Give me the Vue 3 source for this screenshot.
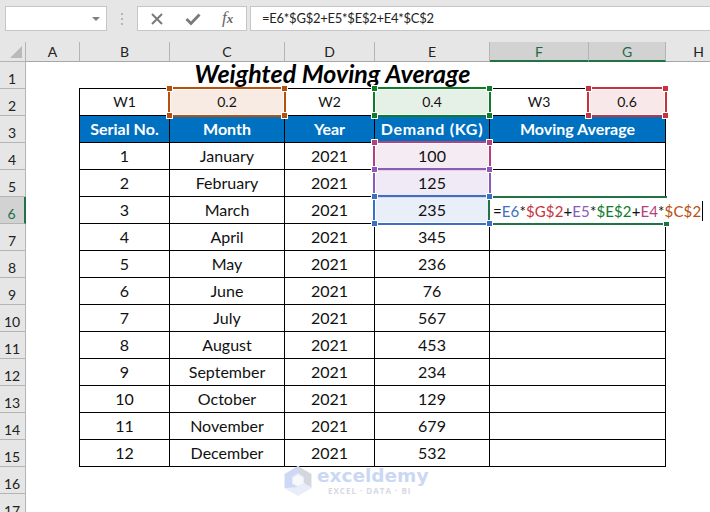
<script setup>
const cols = ['A', 'B', 'C', 'D', 'E', 'F', 'G', 'H']
const rowNums = Array.from({ length: 17 }, (_, i) => i + 1)
const data = [
  ['1', 'January', '2021', '100'],
  ['2', 'February', '2021', '125'],
  ['3', 'March', '2021', '235'],
  ['4', 'April', '2021', '345'],
  ['5', 'May', '2021', '236'],
  ['6', 'June', '2021', '76'],
  ['7', 'July', '2021', '567'],
  ['8', 'August', '2021', '453'],
  ['9', 'September', '2021', '234'],
  ['10', 'October', '2021', '129'],
  ['11', 'November', '2021', '679'],
  ['12', 'December', '2021', '532'],
]
const weights = [
  { col: 2, text: 'W1' },
  { col: 3, text: '0.2', fill: 'fill-orange' },
  { col: 4, text: 'W2' },
  { col: 5, text: '0.4', fill: 'fill-green' },
  { col: 6, text: 'W3' },
  { col: 7, text: '0.6', fill: 'fill-red' },
]
const heads = ['Serial No.', 'Month', 'Year', 'Demand (KG)']
const formula = [
  ['=', 'k'], ['E6', 'b'], ['*', 'k'], ['$G$2', 'r'], ['+', 'k'], ['E5', 'p'], ['*', 'k'],
  ['$E$2', 'g'], ['+', 'k'], ['E4', 'm'], ['*', 'k'], ['$C$2', 'o'],
]
const marks = [
  { c: 3, r: 2, cls: 'mk-orange' },
  { c: 5, r: 2, cls: 'mk-green' },
  { c: 7, r: 2, cls: 'mk-red' },
  { c: 5, r: 4, cls: 'mk-magenta' },
  { c: 5, r: 5, cls: 'mk-purple' },
  { c: 5, r: 6, cls: 'mk-blue' },
]
const place = (c, r, span = 1) => ({ gridColumn: `${c + 1} / span ${span}`, gridRow: r + 1 })
const fillFor = (r) => ({ 4: 'fill-magenta', 5: 'fill-purple', 6: 'fill-blue' })[r]
</script>

<template>
  <div class="app">
    <div class="bar">
      <div class="namebox"><span class="caret-down"></span></div>
      <div class="grip"><i></i><i></i><i></i></div>
      <div class="fxbtns">
        <svg width="14" height="14" viewBox="0 0 14 14"><path d="M2 2 L12 12 M12 2 L2 12" stroke="#7a7a7a" stroke-width="2" fill="none"/></svg>
        <svg width="16" height="14" viewBox="0 0 16 14"><path d="M1.5 7 L6 11.5 L14.5 2.5" stroke="#7a7a7a" stroke-width="2.8" fill="none"/></svg>
        <span class="fx">f<span class="fx-x">x</span></span>
      </div>
      <div class="fbar">=E6*$G$2+E5*$E$2+E4*$C$2</div>
    </div>

    <div class="sheet">
      <div class="corner"><span></span></div>
      <div
        v-for="(c, i) in cols"
        :key="c"
        class="colh"
        :class="{ sel: c === 'F' || c === 'G' }"
        :style="{ gridColumn: i + 2, gridRow: 1 }"
      >{{ c }}</div>
      <div
        v-for="n in rowNums"
        :key="n"
        class="rowh"
        :class="{ sel: n === 6 }"
        :style="{ gridColumn: 1, gridRow: n + 1 }"
      ><span>{{ n }}</span></div>

      <div class="title" :style="place(2, 1, 5)">Weighted Moving Average</div>

      <div
        v-for="w in weights"
        :key="w.col"
        class="cell"
        :class="w.fill"
        :style="place(w.col, 2)"
      >{{ w.text }}</div>

      <div
        v-for="(h, i) in heads"
        :key="h"
        class="cell head"
        :class="{ wide: i === 3 }"
        :style="place(i + 2, 3)"
      >{{ h }}</div>
      <div class="cell head" :style="place(6, 3, 2)">Moving Average</div>

      <template v-for="(row, ri) in data" :key="ri">
        <div
          v-for="(v, ci) in row"
          :key="ci"
          class="cell big"
          :class="ci === 3 ? fillFor(ri + 4) : ''"
          :style="place(ci + 2, ri + 4)"
        >{{ v }}</div>
        <div class="cell" :style="place(6, ri + 4, 2)"></div>
      </template>

      <div class="editor" :style="place(6, 6, 2)">
        <div class="edit-text">
          <span v-for="(f, i) in formula" :key="i" :class="f[1]">{{ f[0] }}</span><span class="text-caret"></span>
        </div>
        <i class="fill-handle"></i>
      </div>

      <div
        v-for="m in marks"
        :key="m.cls"
        class="mark"
        :class="m.cls"
        :style="place(m.c, m.r)"
      >
        <i class="h tl"></i><i class="h tr"></i><i class="h bl"></i><i class="h br"></i>
      </div>
    </div>

    <div class="wm">
      <svg width="30" height="32" viewBox="0 0 30 32">
        <path d="M15 1 L29 9 L29 23 L15 31 L1 23 L1 9 Z" fill="#e9edf7"/>
        <path d="M15 1 L28 9 L28 22 L21 18 L21 12 L15 8 Z" fill="#d4d7dd"/>
        <path d="M2 9 L15 1 L15 8 L9 12 L9 19 L15 22 L2 23 Z" fill="#ccd8f5"/>
        <path d="M15 10 L20 13 L20 18 L15 21 L10 18 L10 13 Z" fill="#f7f8fb"/>
      </svg>
      <div class="wm-text">
        <div class="wm-name">exceldemy</div>
        <div class="wm-sub">EXCEL · DATA · BI</div>
      </div>
    </div>
  </div>
</template>

<style scoped>
.app {
  position: relative;
  width: 710px;
  height: 512px;
  overflow: hidden;
  background: #fff;
  font-family: Lato, "Open Sans", sans-serif;
  color: #111;
}
.bar {
  height: 42px;
  box-sizing: border-box;
  background: #e6e6e6;
  padding: 6px 0 11px 5px;
  display: flex;
}
.namebox {
  width: 102px;
  background: #fff;
  border: 1px solid #c6c6c6;
  box-sizing: border-box;
  position: relative;
}
.caret-down {
  position: absolute;
  right: 6px;
  top: 10px;
  border: 4px solid transparent;
  border-top: 4px solid #7f7f7f;
  border-bottom: 0;
}
.grip {
  width: 30px;
  display: flex;
  flex-direction: column;
  align-items: center;
  justify-content: center;
  gap: 3px;
}
.grip i {
  width: 2px;
  height: 2px;
  background: #b4b4b4;
}
.fxbtns {
  width: 110px;
  background: #fff;
  border: 1px solid #c6c6c6;
  box-sizing: border-box;
  display: flex;
  align-items: center;
  padding-left: 12px;
  gap: 21px;
}
.fx {
  font-family: "Liberation Serif", serif;
  font-style: italic;
  font-size: 17px;
  color: #666;
  line-height: 1;
  margin-top: -2px;
}
.fx-x {
  font-size: 13px;
  font-weight: 700;
}
.fbar {
  flex: 1;
  margin-left: 3px;
  background: #fff;
  border: 1px solid #c6c6c6;
  border-right: 0;
  box-sizing: border-box;
  padding-left: 11px;
  font-size: 13px;
  letter-spacing: -0.25px;
  line-height: 23px;
  color: #222;
}
.sheet {
  display: grid;
  grid-template-columns: 26px 54px 90px 115px 90px 115px 99px 77px 66px;
  grid-template-rows: 20px repeat(17, 27px);
}
.corner {
  grid-column: 1;
  grid-row: 1;
  background: #e6e6e6;
  border-right: 1px solid #b4b4b4;
  border-bottom: 1px solid #b4b4b4;
  box-sizing: border-box;
  position: relative;
}
.corner span {
  position: absolute;
  right: 3px;
  bottom: 3px;
  border-style: solid;
  border-width: 0 0 12px 12px;
  border-color: transparent transparent #b9b9b9 transparent;
}
.colh {
  background: #e6e6e6;
  border-right: 1px solid #b4b4b4;
  border-bottom: 1px solid #a6a6a6;
  box-sizing: border-box;
  text-align: center;
  font-size: 14px;
  line-height: 19px;
  color: #222;
}
.colh.sel {
  background: #d2d2d2;
  color: #1f6b45;
  border-bottom: 2px solid #217346;
}
.rowh {
  background: #e6e6e6;
  border-right: 1px solid #b4b4b4;
  border-bottom: 1px solid #b4b4b4;
  box-sizing: border-box;
  display: flex;
  align-items: flex-end;
  justify-content: center;
  font-size: 14px;
  line-height: 18px;
  color: #222;
  padding-right: 1px;
}
.rowh.sel {
  background: #d2d2d2;
  color: #1f6b45;
  border-right: 2px solid #217346;
}
.title {
  text-align: center;
  font-weight: 700;
  font-style: italic;
  font-size: 25px;
  line-height: 22px;
  color: #000;
  padding-right: 4px;
  white-space: nowrap;
}
.cell {
  margin: -1px 0 0 -1px;
  border: 1px solid #000;
  display: flex;
  align-items: center;
  justify-content: center;
  font-size: 14px;
  color: #111;
  background: #fff;
  min-width: 0;
  padding-bottom: 2px;
  box-sizing: border-box;
}
.big {
  font-size: 16px;
}
.head {
  background: #0070c0;
  color: #fff;
  font-weight: 700;
  font-size: 16px;
}
.wide {
  letter-spacing: 0.7px;
}
.fill-orange { background: #f7ebe3; }
.fill-green { background: #e5f0e6; }
.fill-red { background: #f9e8e9; }
.fill-magenta { background: #f5ebf2; }
.fill-purple { background: #efeaf6; }
.fill-blue { background: #e8eff8; }

.mark {
  margin: -2px -1px -1px -2px;
  border: 2px solid var(--c);
  outline: 1px solid rgba(255, 255, 255, 0.75);
  outline-offset: -3px;
  position: relative;
}
.mk-orange { --c: #b7500f; }
.mk-green { --c: #107c2b; }
.mk-red { --c: #c4343f; }
.mk-magenta { --c: #b3407f; }
.mk-purple { --c: #8a5cb8; }
.mk-blue { --c: #3d6fc2; }
.h {
  position: absolute;
  z-index: 2;
  width: 5px;
  height: 5px;
  background: var(--c);
  outline: 1px solid #fff;
}
.tl { left: -3px; top: -3px; }
.tr { right: -3px; top: -3px; }
.bl { left: -3px; bottom: -3px; }
.br { right: -3px; bottom: -3px; }

.editor {
  margin: -1px -1px -1px -2px;
  border-top: 2px solid #217346;
  border-bottom: 2px solid #217346;
  border-left: 2px solid #217346;
  position: relative;
  z-index: 1;
  background: #fff;
  grid-row: 7;
}
.edit-text {
  position: absolute;
  left: 0;
  top: 0;
  bottom: 0;
  width: 216px;
  background: #fff;
  padding-left: 3px;
  box-sizing: border-box;
  font-size: 15px;
  letter-spacing: 0.12px;
  line-height: 24px;
  white-space: nowrap;
  display: flex;
  align-items: center;
}
.text-caret {
  display: inline-block;
  width: 1px;
  height: 20px;
  background: #000;
  margin-left: 1px;
}
.fill-handle {
  position: absolute;
  right: -2px;
  bottom: -3px;
  width: 5px;
  height: 4px;
  background: #217346;
  outline: 1px solid #fff;
}
.k { color: #111; }
.b { color: #3d6fc2; }
.r { color: #c4343f; }
.p { color: #8a5cb8; }
.g { color: #107c2b; }
.m { color: #b3407f; }
.o { color: #b7500f; }

.wm {
  position: absolute;
  left: 283px;
  top: 465px;
  display: flex;
  gap: 4px;
  pointer-events: none;
}
.wm-name {
  font-family: "DejaVu Sans", sans-serif;
  font-weight: 700;
  font-size: 18.5px;
  line-height: 21px;
  color: #cbd8f4;
}
.wm-sub {
  font-family: "Open Sans", sans-serif;
  font-weight: 700;
  font-size: 8px;
  line-height: 9px;
  letter-spacing: 1px;
  color: #d6d9df;
  padding-left: 11px;
}
</style>
